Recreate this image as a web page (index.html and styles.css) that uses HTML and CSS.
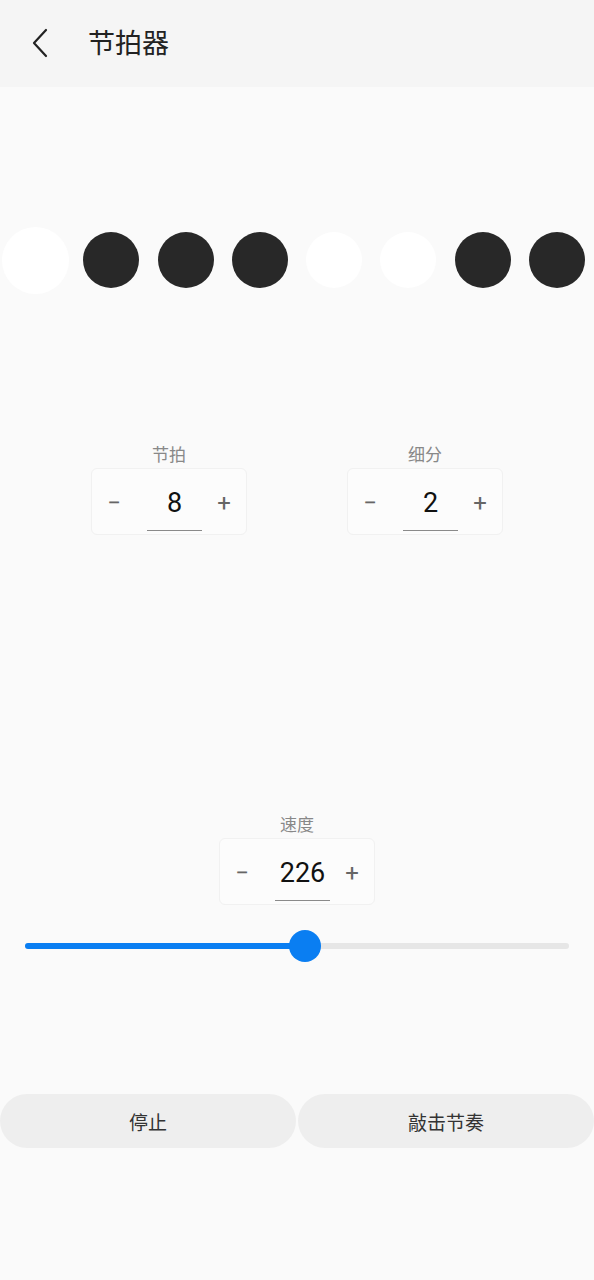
FILE: index.html
```html
<!DOCTYPE html>
<html lang="zh-CN">
<head>
    <meta charset="UTF-8">
    <meta name="viewport" content="width=device-width, initial-scale=1.0">
    <link rel="stylesheet" href="styles.css">
    <title>节拍器</title>
</head>
<body>
    <div class="app">
        <div class="header">
            <div class="back">
                <svg width="20" height="32" viewBox="0 0 20 32">
                    <path d="M16 3 L4 16 L16 29" fill="none" stroke="#222" stroke-width="2.2" stroke-linecap="round" stroke-linejoin="round"/>
                </svg>
            </div>
            <div class="title">节拍器</div>
        </div>

        <div class="beats">
            <div class="beat-cell"><div class="beat light current"></div></div>
            <div class="beat-cell"><div class="beat dark"></div></div>
            <div class="beat-cell"><div class="beat dark"></div></div>
            <div class="beat-cell"><div class="beat dark"></div></div>
            <div class="beat-cell"><div class="beat light"></div></div>
            <div class="beat-cell"><div class="beat light"></div></div>
            <div class="beat-cell"><div class="beat dark"></div></div>
            <div class="beat-cell"><div class="beat dark"></div></div>
        </div>

        <div class="stepper-row">
            <div class="stepper-group">
                <div class="stepper-label">节拍</div>
                <div class="stepper">
                    <div class="step-btn">−</div>
                    <div class="step-value">8</div>
                    <div class="step-btn">+</div>
                </div>
            </div>
            <div class="stepper-group">
                <div class="stepper-label">细分</div>
                <div class="stepper">
                    <div class="step-btn">−</div>
                    <div class="step-value">2</div>
                    <div class="step-btn">+</div>
                </div>
            </div>
        </div>

        <div class="speed">
            <div class="stepper-group">
                <div class="stepper-label">速度</div>
                <div class="stepper">
                    <div class="step-btn">−</div>
                    <div class="step-value">226</div>
                    <div class="step-btn">+</div>
                </div>
            </div>
        </div>

        <div class="slider">
            <div class="track">
                <div class="track-fill" style="width: 51.5%"></div>
                <div class="thumb" style="left: 51.5%"></div>
            </div>
        </div>

        <div class="actions">
            <button class="action-btn">停止</button>
            <button class="action-btn">敲击节奏</button>
        </div>
    </div>
</body>
</html>
```

FILE: styles.css
```css
body {
    margin: 0;
    font-family: Roboto, "Noto Sans CJK SC", sans-serif;
    background-color: #fafafa;
    color: #222;
}

.app {
    display: flex;
    flex-direction: column;
    min-height: 1280px;
}

.header {
    height: 87px;
    display: flex;
    align-items: center;
    background-color: #f5f5f5;
    padding-left: 30px;
}

.back {
    width: 20px;
    height: 32px;
    margin-right: 38px;
    margin-top: -1px;
}

.back svg {
    display: block;
}

.title {
    font-size: 27px;
    color: #222;
    line-height: 30px;
}

.beats {
    display: flex;
    align-items: center;
    margin-top: 139px;
    height: 68px;
}

.beat-cell {
    flex: 1;
    display: flex;
    justify-content: center;
}

.beat {
    width: 56px;
    height: 56px;
    border-radius: 50%;
}

.beat.dark {
    background-color: #282828;
}

.beat.light {
    background-color: #fff;
}

.beat.current {
    width: 67px;
    height: 67px;
    margin-left: -3px;
}

.stepper-row {
    display: flex;
    justify-content: center;
    gap: 100px;
    margin-top: 151px;
}

.stepper-group {
    display: flex;
    flex-direction: column;
    align-items: center;
}

.stepper-label {
    font-size: 17px;
    line-height: 20px;
    color: #888;
    margin-bottom: 3px;
}

.stepper {
    display: flex;
    height: 67px;
    box-sizing: border-box;
    padding-top: 6px;
    border: 1px solid #f1f1f1;
    border-radius: 6px;
    background-color: #fcfcfc;
}

.step-btn {
    width: 44px;
    height: 56px;
    line-height: 56px;
    text-align: center;
    font-size: 24px;
    color: #666;
}

.step-value {
    width: 55px;
    height: 56px;
    box-sizing: border-box;
    margin: 0 0 0 11px;
    line-height: 56px;
    text-align: center;
    font-size: 27px;
    color: #111;
    border-bottom: 1px solid #8a8a8a;
}

.speed {
    display: flex;
    justify-content: center;
    margin-top: 280px;
}

.slider {
    margin-top: 25px;
    padding: 0 25px;
    height: 32px;
    display: flex;
    align-items: center;
}

.track {
    position: relative;
    flex: 1;
    height: 6px;
    border-radius: 3px;
    background-color: #e6e6e6;
}

.track-fill {
    height: 100%;
    border-radius: 3px;
    background-color: #0a7ef2;
}

.thumb {
    position: absolute;
    top: 50%;
    width: 32px;
    height: 32px;
    margin: -16px 0 0 -16px;
    border-radius: 50%;
    background-color: #0a7ef2;
}

.actions {
    display: flex;
    gap: 2px;
    margin-top: 132px;
}

.action-btn {
    flex: 1;
    height: 54px;
    border: none;
    border-radius: 27px;
    background-color: #eeeeee;
    font-family: Roboto, "Noto Sans CJK SC", sans-serif;
    font-size: 19px;
    color: #333;
    padding: 0;
}
```
